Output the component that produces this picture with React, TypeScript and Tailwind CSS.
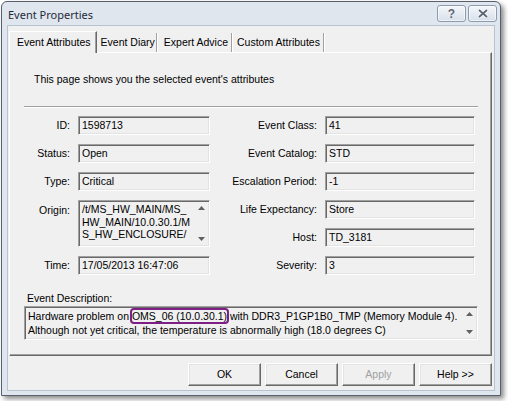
const field =
  "border border-t-[#a0a0a0] border-l-[#a0a0a0] border-r-white border-b-white bg-[#f0f0f0] shadow-[inset_1px_1px_0_#696969,inset_-1px_-1px_0_#e3e3e3]";
const raised =
  "border border-t-white border-l-white border-r-[#696969] border-b-[#696969] bg-[#f0f0f0] shadow-[inset_-1px_-1px_0_#a0a0a0,inset_1px_1px_0_#e3e3e3]";

function Arrow({ up }: { up?: boolean }) {
  return (
    <svg width="7" height="4" viewBox="0 0 7 4">
      <path d={up ? "M0 4 L3.5 0 L7 4 Z" : "M0 0 L3.5 4 L7 0 Z"} fill="#606060" />
    </svg>
  );
}

function ScrollBar() {
  return (
    <div className="flex w-[16px] shrink-0 flex-col items-center justify-between py-[5px]">
      <Arrow up />
      <Arrow />
    </div>
  );
}

function Field({ label, value, labelWidth, boxWidth }: { label: string; value: string; labelWidth: string; boxWidth: string }) {
  return (
    <div className="flex h-[19px] items-center gap-[8px]">
      <span className={`${labelWidth} text-right`}>{label}</span>
      <div className={`${field} ${boxWidth} flex h-[19px] items-center pl-[3px]`}>{value}</div>
    </div>
  );
}

function TitleButton({ children }: { children: React.ReactNode }) {
  return (
    <div className="flex h-[17px] w-[29px] items-center justify-center rounded-[3px] border border-[#8b9bb0] bg-gradient-to-b from-[#f4f7fa] to-[#d7e0ea] shadow-[inset_0_0_0_1px_rgba(255,255,255,0.6)]">
      {children}
    </div>
  );
}

function Button({ label, disabled }: { label: string; disabled?: boolean }) {
  return (
    <div className={`${raised} flex h-[23px] w-[73px] items-center justify-center ${disabled ? "text-[#a0a0a0]" : ""}`}>
      {label}
    </div>
  );
}

export default function App() {
  return (
    <div className="h-[401px] w-[508px] bg-white pl-[1px] pt-[1px] font-['Liberation_Sans',Arial,sans-serif] text-[10.5px] text-black">
      <div className="flex h-[395px] w-[500px] flex-col rounded-t-[6px] border border-[#56616d] bg-[#dfe6ee] shadow-[3px_3px_5px_rgba(0,0,0,0.45)]">
        {/* title bar */}
        <div className="flex h-[23px] items-start justify-between pl-[6px] pr-[3px] pt-[3px]">
          <span className="mt-[2px] font-['Noto_Sans',sans-serif] text-[11px] text-[#1f2a38]">Event Properties</span>
          <div className="flex gap-[2px]">
            <TitleButton>
              <span className="font-bold text-[12px] leading-none text-[#5b6574] [text-shadow:0_0_1px_#fff]">?</span>
            </TitleButton>
            <TitleButton>
              <svg width="12" height="9" viewBox="0 0 12 9">
                <path d="M2 1 L10 8 M10 1 L2 8" stroke="#fff" strokeWidth="3.5" />
                <path d="M2 1 L10 8 M10 1 L2 8" stroke="#5b6574" strokeWidth="1.8" />
              </svg>
            </TitleButton>
          </div>
        </div>

        {/* client area */}
        <div className="mx-[5px] mb-[4px] flex flex-1 flex-col border border-[#b7c3d1] bg-[#f0f0f0] pl-[1px] pr-[2px] pt-[5px]">
          <div className="flex h-[21px] items-end">
            <div className="relative z-10 -mb-px flex h-[22px] items-center border-l border-r border-t border-l-white border-r-[#696969] border-t-white bg-[#f0f0f0] pl-[7px] pr-[5px] shadow-[inset_-1px_0_0_#a0a0a0]">
              Event Attributes
            </div>
            <div className="flex h-[19px] items-center border-r border-r-[#a0a0a0] pl-[4px] pr-[1px] shadow-[1px_0_0_#fff]">Event Diary</div>
            <div className="flex h-[19px] items-center border-r border-r-[#a0a0a0] pl-[7px] pr-[3px] shadow-[1px_0_0_#fff]">Expert Advice</div>
            <div className="flex h-[19px] items-center border-r border-r-[#a0a0a0] pl-[5px] pr-[3px] shadow-[1px_0_0_#fff]">Custom Attributes</div>
          </div>

          {/* tab panel */}
          <div className="flex h-[304px] flex-col border border-b-[#696969] border-l-white border-r-[#696969] border-t-white shadow-[inset_-1px_-1px_0_#a0a0a0] pl-[14px] pr-[13px]">
            <p className="ml-[10px] mt-[20px] leading-[13px]">This page shows you the selected event&apos;s attributes</p>
            <div className="mt-[20px] h-[2px] border-t border-t-[#a0a0a0] border-b border-b-white" />

            <div className="mt-[8px] flex">
              <div className="flex w-[196px] flex-col gap-[9px]">
                <Field label="ID:" value="1598713" labelWidth="w-[46px]" boxWidth="w-[132px]" />
                <Field label="Status:" value="Open" labelWidth="w-[46px]" boxWidth="w-[132px]" />
                <Field label="Type:" value="Critical" labelWidth="w-[46px]" boxWidth="w-[132px]" />
                <div className="flex h-[47px] items-start gap-[8px]">
                  <span className="mt-[3px] w-[46px] text-right">Origin:</span>
                  <div className={`${field} flex h-[47px] w-[132px]`}>
                    <div className="flex-1 pl-[3px] pt-[2px] leading-[12.5px]">
                      /t/MS_HW_MAIN/MS_
                      <br />
                      HW_MAIN/10.0.30.1/M
                      <br />
                      S_HW_ENCLOSURE/
                    </div>
                    <ScrollBar />
                  </div>
                </div>
                <Field label="Time:" value="17/05/2013 16:47:06" labelWidth="w-[46px]" boxWidth="w-[132px]" />
              </div>
              <div className="flex flex-col gap-[9px]">
                <Field label="Event Class:" value="41" labelWidth="w-[97px]" boxWidth="w-[150px]" />
                <Field label="Event Catalog:" value="STD" labelWidth="w-[97px]" boxWidth="w-[150px]" />
                <Field label="Escalation Period:" value="-1" labelWidth="w-[97px]" boxWidth="w-[150px]" />
                <Field label="Life Expectancy:" value="Store" labelWidth="w-[97px]" boxWidth="w-[150px]" />
                <Field label="Host:" value="TD_3181" labelWidth="w-[97px]" boxWidth="w-[150px]" />
                <Field label="Severity:" value="3" labelWidth="w-[97px]" boxWidth="w-[150px]" />
              </div>
            </div>

            <p className="ml-[3px] mt-[17px] leading-[13px]">Event Description:</p>
            <div className={`${field} mt-[1px] flex h-[34px]`}>
              <div className="flex-1 whitespace-nowrap pl-[3px] pt-[3px] leading-[13.5px]">
                Hardware problem on{" "}
                <span className="rounded-[2px] outline outline-2 outline-[#7d1f84]">OMS_06 (10.0.30.1)</span> with
                DDR3_P1GP1B0_TMP (Memory Module 4).
                <br />
                Although not yet critical, the temperature is abnormally high (18.0 degrees C)
              </div>
              <ScrollBar />
            </div>
          </div>

          {/* buttons */}
          <div className="mt-[7px] flex justify-end gap-[4px]">
            <Button label="OK" />
            <Button label="Cancel" />
            <Button label="Apply" disabled />
            <Button label="Help >>" />
          </div>
        </div>
      </div>
    </div>
  );
}
